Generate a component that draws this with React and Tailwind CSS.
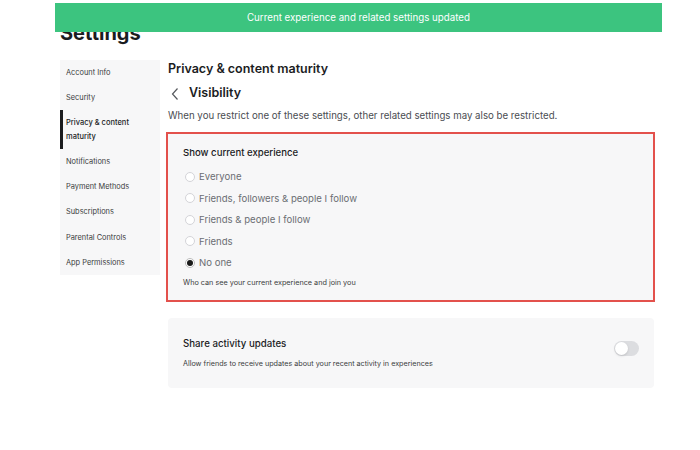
import React from "react";

const font = { fontFamily: "Inter, 'Noto Sans', sans-serif" };

function Radio({ checked, label }) {
  return (
    <div className="flex items-center h-[21.5px]">
      <span
        className={
          "w-[10px] h-[10px] rounded-full border flex items-center justify-center mr-[4px] ml-[2px] " +
          (checked ? "border-[#bdbdbd] bg-white" : "border-[#d4d4d8] bg-white")
        }
      >
        {checked && <span className="w-[6px] h-[6px] rounded-full bg-[#1a1a1a]" />}
      </span>
      <span className="text-[9.6px] text-[#6b6e73] leading-none">{label}</span>
    </div>
  );
}

export default function App() {
  const items = [
    "Account Info",
    "Security",
    "Privacy & content maturity",
    "Notifications",
    "Payment Methods",
    "Subscriptions",
    "Parental Controls",
    "App Permissions",
  ];
  return (
    <div className="w-[700px] h-[450px] bg-white relative overflow-hidden" style={font}>
      <div className="absolute left-[55px] top-[3px] w-[607px] h-[29px] bg-[#3cc47f] flex items-center justify-center z-10">
        <span className="text-white text-[9.75px] leading-none">
          Current experience and related settings updated
        </span>
      </div>
      <div className="pl-[60px] pt-[23px]">
        <h1 className="text-[20px] leading-none font-bold text-[#1b1c1e] h-[37px]">Settings</h1>
        <div className="flex">
          <div className="w-[100px] bg-[#f7f7f8] h-[215px] flex flex-col">
            {items.map((it, i) =>
              i === 2 ? (
                <div
                  key={it}
                  className="h-[39px] border-l-[3px] border-[#1b1c1e] pl-[3px] pr-[6px] flex items-center"
                >
                  <span className="text-[7.5px] leading-[14px] text-[#232527] font-medium">
                    Privacy &amp; content
                    <br />
                    maturity
                  </span>
                </div>
              ) : (
                <div key={it} className="h-[25.3px] pl-[6px] flex items-center">
                  <span className="text-[7.4px] leading-none text-[#3b3d40]">{it}</span>
                </div>
              )
            )}
          </div>
          <div className="ml-[8px] w-[487px]">
            <div className="text-[12.5px] leading-none font-semibold text-[#1b1c1e] mt-[3px]">
              Privacy &amp; content maturity
            </div>
            <div className="flex items-center mt-[10px] h-[16px]">
              <svg width="10" height="14" viewBox="0 0 10 14" className="ml-[2px] mr-[9px]">
                <path d="M7.5 1.5 L2.5 7 L7.5 12.5" fill="none" stroke="#55585d" strokeWidth="1.2" />
              </svg>
              <span className="text-[12.5px] leading-none font-semibold text-[#1b1c1e]">Visibility</span>
            </div>
            <div className="text-[9.7px] leading-none text-[#4a4d52] mt-[9px]">
              When you restrict one of these settings, other related settings may also be restricted.
            </div>
            <div className="mt-[12px] -ml-[2px] border-2 border-[#e3514c] w-[489px] h-[170px] bg-[#f7f7f8] pl-[15px] pt-[14px]">
              <div className="text-[9.6px] leading-none font-medium text-[#1b1c1e] h-[12px]">
                Show current experience
              </div>
              <div className="mt-[6px]">
                <Radio label="Everyone" />
                <Radio label="Friends, followers & people I follow" />
                <Radio label="Friends & people I follow" />
                <Radio label="Friends" />
                <Radio label="No one" checked />
              </div>
              <div className="text-[7.25px] leading-none text-[#3b3d40] mt-[5px]">
                Who can see your current experience and join you
              </div>
            </div>
            <div className="mt-[16px] w-[486px] h-[70px] bg-[#f7f7f8] rounded-[4px] pl-[15px] pr-[15px] flex items-center justify-between">
              <div>
                <div className="text-[9.7px] leading-none text-[#1b1c1e] font-medium">Share activity updates</div>
                <div className="text-[7.2px] leading-none text-[#3b3d40] mt-[12px]">
                  Allow friends to receive updates about your recent activity in experiences
                </div>
              </div>
              <div className="w-[25px] h-[15px] rounded-full bg-[#dcdde0] relative -mt-[10px]">
                <span className="absolute left-[1px] top-[1px] w-[13px] h-[13px] rounded-full bg-white shadow-sm" />
              </div>
            </div>
          </div>
        </div>
      </div>
    </div>
  );
}
